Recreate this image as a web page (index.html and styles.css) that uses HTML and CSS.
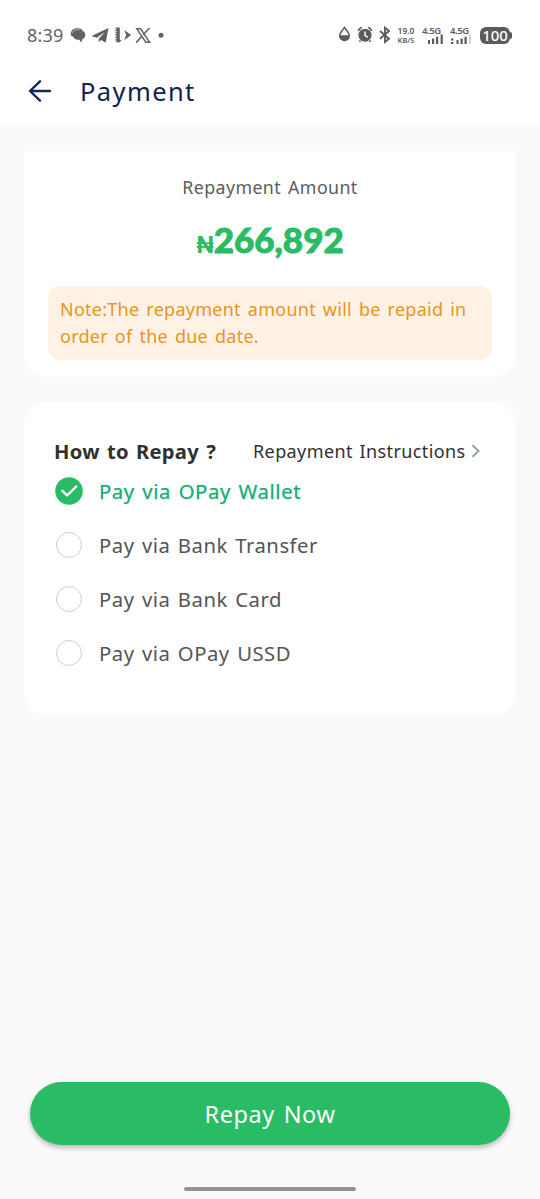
FILE: index.html
```html
<!DOCTYPE html>
<html lang="en">
<head>
<meta charset="utf-8">
<title>Payment</title>
<link rel="stylesheet" href="styles.css">
</head>
<body>
<div class="screen">
  <div class="top">
    <div class="status">
      <span class="clock">8:39</span>
      <svg class="notif" width="98" height="24" viewBox="0 0 98 24" fill="#626262">
        <path d="M9 7c4 0 6.300 2.100 6.300 4.900 0 2-1.100 3.500-2.900 4.300l-1.200 3.200-1.800-2.700C5.400 16.900 2.700 14.700 2.700 11.900S5.300 7 9 7z"/>
        <path d="M1 12.500C-.2 8.500 3 5.200 7 5.200c2.500 0 4.500.6 5.700 1.600L8 9.500 3 13.500z"/>
        <path d="M2.300 10.200C3.500 7.300 6.500 6.300 9.500 6.500" fill="none" stroke="#fff" stroke-width=".5"/>
        <path d="M38.500 5L22.600 12.400c-.7.400-.6.900.1 1.200l4.200 1.200 8-6-6 6.900-.2 3.200 2.500-2 3.600 2.300c.6.300 1 .2 1.100-.5z"/>
        <path d="M45.500 4.500h4.300v12l1.600 1.300-2.900 2-3-1.500z"/>
        <path d="M46.200 5.500v12.500" stroke="#fff" stroke-width="1.200" stroke-dasharray="1 1.400"/>
        <path d="M54.200 7l7 4.900-7 5.400 2-5.200z"/>
        <path d="M66.800 5.800h3.800l9 13.400h-3.800z" fill="none" stroke="#626262" stroke-width="1.500"/>
        <path d="M79.500 5l-6.400 6.700M71.800 13.300L66.200 19.600" stroke="#626262" stroke-width="1.600"/>
        <circle cx="91" cy="12.200" r="2.500"/>
      </svg>
      <div class="system">
        <svg width="54" height="22" viewBox="0 0 54 22">
          <path d="M6.500 3.500c2 3 4.800 5.200 4.800 8.200a4.800 4.800 0 0 1-9.600 0c0-3 2.800-5.200 4.800-8.200z" fill="none" stroke="#5b5b5b" stroke-width="1.500"/>
          <path d="M2 11.200h9v1.800c-.6 2.500-2.300 3.700-4.500 3.700S2.500 15.500 2 13z" fill="#5b5b5b"/>
          <circle cx="27" cy="11.200" r="6.500" fill="#5b5b5b"/>
          <path d="M20.200 6.800A10 10 0 0 1 23.600 3.300M30.400 3.300A10 10 0 0 1 33.800 6.800M22.500 16.500l-1 1.300M31.500 16.500l1 1.300" fill="none" stroke="#5b5b5b" stroke-width="1.800"/>
          <path d="M27 7.400v4l2.800 1.900" fill="none" stroke="#fff" stroke-width="1.500"/>
          <path d="M42 7l9 7.700-4 3.200V3.800l4 3.200-9 7.700" fill="none" stroke="#5b5b5b" stroke-width="1.900"/>
        </svg>
        <div class="speed"><span>19.0</span><span class="unit">KB/S</span></div>
        <div class="signal"><span>4.5G</span>
          <svg width="22" height="10" viewBox="0 0 22 10" fill="#5b5b5b"><path d="M6 6h2v4H6zM10 4.500h2.200V10H10zM14 2.800h2.200V10H14zM18.600 0.600h2.200V10h-2.200z"/></svg>
        </div>
        <div class="signal second"><span>4.5G</span>
          <svg width="22" height="10" viewBox="0 0 22 10" fill="#5b5b5b"><path d="M1 4.500h2.400v2H1zM1 8h2.400v2H1zM6.500 6h2v4h-2zM10.500 4.500h2.200V10h-2.200zM14.500 2.800h2.200V10h-2.200z"/><path d="M19 .6h1.500V10H19z" opacity=".35"/></svg>
        </div>
        <div class="battery"><span>100</span></div>
        <i class="nub"></i>
      </div>
    </div>
    <div class="bar">
      <svg width="26" height="26" viewBox="0 0 26 26" fill="none" stroke="#14275a" stroke-width="2.400" stroke-linecap="round" stroke-linejoin="round"><path d="M13 3.300L3 13l10 9.700M3.300 13H23"/></svg>
      <h1 class="title">Payment</h1>
    </div>
  </div>
  <div class="content">
    <section class="card amount-card">
      <div class="label">Repayment Amount</div>
      <div class="amount"><span class="naira">₦</span><span class="figure">266,892</span></div>
      <div class="note">Note:The repayment amount will be repaid in<br>order of the due date.</div>
    </section>
    <section class="card methods">
      <div class="head">
        <h2 class="how">How to Repay ?</h2>
        <span class="instructions">Repayment Instructions</span>
        <svg width="10" height="14" viewBox="0 0 10 14" fill="none" stroke="#999da3" stroke-width="1.900"><path d="M1.500 1.200L7.600 7l-6.100 5.800"/></svg>
      </div>
      <div class="option selected">
        <svg width="28" height="28" viewBox="0 0 28 28"><circle cx="14" cy="14" r="13.800" fill="#2abb65"/><path d="M7.400 13.800l4.700 4.700 9.100-9" fill="none" stroke="#fff" stroke-width="2.400" stroke-linecap="round" stroke-linejoin="round"/></svg>
        <span>Pay via OPay Wallet</span>
      </div>
      <div class="option"><i class="radio"></i><span>Pay via Bank Transfer</span></div>
      <div class="option"><i class="radio"></i><span>Pay via Bank Card</span></div>
      <div class="option"><i class="radio"></i><span>Pay via OPay USSD</span></div>
    </section>
  </div>
  <div class="bottom">
    <button class="repay">Repay Now</button>
    <div class="handle"></div>
  </div>
</div>
</body>
</html>
```
FILE: styles.css
```css
* { box-sizing: border-box; margin: 0; padding: 0; }
body { font-family: "Noto Sans", sans-serif; background: #fafafa; }
svg { display: block; flex: none; }
.screen { width: 540px; height: 1199px; display: flex; flex-direction: column; background: #fafafa; white-space: nowrap; }
.top { height: 127px; background: #fff; flex: none; }
.status { display: flex; align-items: center; height: 58px; padding: 12px 29px 0 27px; color: #626262; }
.clock { font-size: 18px; line-height: 24px; width: 43px; letter-spacing: 0.200px; }
.notif { margin-top: -1px; }
.system { display: flex; align-items: center; margin-left: auto; color: #5b5b5b; }
.speed { display: flex; flex-direction: column; align-items: center; gap: 1px; width: 20px; margin-left: 4px; font-size: 8.500px; line-height: 8px; font-weight: 600; }
.unit { font-size: 7.500px; }
.signal { width: 22px; margin-left: 6px; display: flex; flex-direction: column; font-size: 9.500px; line-height: 9px; font-weight: 600; letter-spacing: -0.400px; }
.signal svg { margin-top: -1px; }
.battery { width: 30px; height: 17px; margin-left: 8px; border-radius: 6px; background: #5b5b5b; color: #fff; font-size: 15px; line-height: 17px; font-weight: 500; text-align: center; }
.nub { width: 2px; height: 7px; margin-right: -1px; border-radius: 0 2px 2px 0; background: #5b5b5b; }
.bar { display: flex; align-items: center; height: 66px; padding-left: 27px; }
.title { margin-left: 27px; font-size: 25.500px; font-weight: 400; color: #14214f; letter-spacing: 1.400px; }
.content { flex: 1; display: flex; flex-direction: column; gap: 25px; padding: 24px 24px 0; }
.card { background: #fff; border-radius: 24px; }
.amount-card { height: 226px; border-radius: 0 0 24px 24px; padding: 22px 24px 0; }
.label { text-align: center; font-size: 17.800px; line-height: 28px; color: #5c5c5c; letter-spacing: 0.400px; word-spacing: 2px; }
.amount { display: flex; justify-content: center; align-items: baseline; height: 50px; margin-top: 13px; line-height: 50px; color: #2abb65; font-weight: 900; }
.naira { font-family: Inter, sans-serif; font-weight: 700; font-size: 23px; }
.figure { font-family: Lato, sans-serif; font-size: 35px; -webkit-text-stroke: 0.900px #2abb65; }
.note { height: 74px; margin-top: 22px; border-radius: 12px; background: #fff2e5; padding: 10px 12px; font-size: 18px; line-height: 27px; color: #ec941d; letter-spacing: 0.260px; word-spacing: 2px; }
.methods { height: 314px; padding: 35px 30px 0; }
.head { display: flex; align-items: center; height: 27px; }
.how { width: 199px; font-size: 20.200px; font-weight: 700; color: #303030; letter-spacing: 0.300px; word-spacing: 1.500px; }
.instructions { width: 218px; font-size: 18px; color: #303030; letter-spacing: 0.400px; word-spacing: 1.500px; }
.option { display: flex; align-items: center; height: 54px; color: #555; font-size: 20.300px; gap: 16px; padding-left: 1px; letter-spacing: 0.500px; word-spacing: 1.700px; }
.option.selected { color: #12ae75; letter-spacing: 0.600px; -webkit-text-stroke: 0.250px #12ae75; }
.radio { width: 26px; height: 26px; margin: 0 1px; border: 1px solid #cfcfcf; border-radius: 50%; }
.bottom { height: 117px; padding: 0 30px; display: flex; flex-direction: column; align-items: center; flex: none; }
.repay { width: 480px; height: 63px; flex: none; border: 0; border-radius: 32px; background: #2abb65; color: #fff; font: 400 23.500px "Noto Sans", sans-serif; letter-spacing: 0.600px; word-spacing: 2px; box-shadow: 0 3px 5px rgba(0,0,0,.26); }
.handle { width: 172px; height: 4px; margin-top: 42px; border-radius: 2px; background: #929292; }
```
